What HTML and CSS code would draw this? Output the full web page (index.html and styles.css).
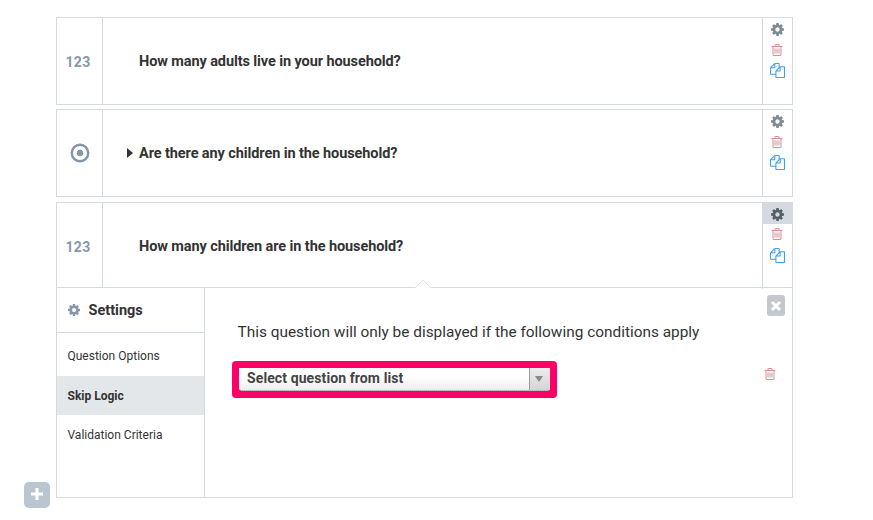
FILE: index.html
```
<!DOCTYPE html>
<html lang="en">
<head>
<meta charset="utf-8">
<title>Form builder</title>
<link rel="stylesheet" href="styles.css">
</head>
<body>
<svg class="defs" width="0" height="0">
  <symbol id="cog" viewBox="0 0 1792 1792"><path d="M1152 896q0-106-75-181t-181-75-181 75-75 181 75 181 181 75 181-75 75-181zm512-109v222q0 12-8 23t-20 13l-185 28q-19 54-39 91 35 50 107 138 10 12 10 25t-9 23q-27 37-99 108t-94 71q-12 0-26-9l-138-108q-44 23-91 38-16 136-29 186-7 28-36 28h-222q-14 0-24.5-8.5t-11.5-21.5l-28-184q-49-16-90-37l-141 107q-10 9-25 9-14 0-25-11-126-114-165-168-7-10-7-23 0-12 8-23 15-21 51-66.500t54-70.500q-27-50-41-99l-183-27q-13-2-21-12.500t-8-23.500v-222q0-12 8-23t19-13l186-28q14-46 39-92-40-57-107-138-10-12-10-24 0-10 9-23 26-36 98.500-107.500t94.500-71.500q13 0 26 10l138 107q44-23 91-38 16-136 29-186 7-28 36-28h222q14 0 24.500 8.500t11.500 21.500l28 184q49 16 90 37l142-107q9-9 24-9 13 0 25 10 129 119 165 170 7 8 7 22 0 12-8 23-15 21-51 66.500t-54 70.500q26 50 41 98l183 28q13 2 21 12.500t8 23.500z"/></symbol>
  <symbol id="trash" viewBox="0 0 1792 1792"><path d="M704 736v576q0 14-9 23t-23 9h-64q-14 0-23-9t-9-23v-576q0-14 9-23t23-9h64q14 0 23 9t9 23zm256 0v576q0 14-9 23t-23 9h-64q-14 0-23-9t-9-23v-576q0-14 9-23t23-9h64q14 0 23 9t9 23zm256 0v576q0 14-9 23t-23 9h-64q-14 0-23-9t-9-23v-576q0-14 9-23t23-9h64q14 0 23 9t9 23zm128 724v-948h-896v948q0 22 7 40.500t14.500 27 10.500 8.500h832q3 0 10.500-8.500t14.500-27 7-40.500zm-672-1076h448l-48-117q-7-9-17-11h-317q-10 2-17 11zm928 32v64q0 14-9 23t-23 9h-96v948q0 83-47 143.500t-113 60.500h-832q-66 0-113-58.500t-47-141.500v-952h-96q-14 0-23-9t-9-23v-64q0-14 9-23t23-9h309l70-167q15-37 54-63t79-26h320q40 0 79 26t54 63l70 167h309q14 0 23 9t9 23z"/></symbol>
  <symbol id="copy" viewBox="0 0 1792 1792"><path d="M1696 384q40 0 68 28t28 68v1216q0 40-28 68t-68 28h-960q-40 0-68-28t-28-68v-288h-544q-40 0-68-28t-28-68v-672q0-40 20-88t48-76l408-408q28-28 76-48t88-20h416q40 0 68 28t28 68v328q68-40 128-40h416zm-544 213l-299 299h299v-299zm-640-384l-299 299h299v-299zm196 647l316-316v-416h-384v416q0 40-28 68t-68 28h-416v640h512v-256q0-40 20-88t48-76zm956 804v-1152h-384v416q0 40-28 68t-68 28h-416v640h896z"/></symbol>
</svg>
<main class="form">
  <section class="question">
    <div class="type">123</div>
    <div class="label">How many adults live in your household?</div>
    <div class="actions">
      <span class="action"><svg class="cog"><use href="#cog"/></svg></span>
      <span class="action"><svg class="trash"><use href="#trash"/></svg></span>
      <span class="action"><svg class="copy"><use href="#copy"/></svg></span>
    </div>
  </section>
  <section class="question">
    <div class="type"><svg class="radio" viewBox="0 0 20 20"><circle cx="10" cy="10" r="8.200" fill="none" stroke="currentColor" stroke-width="2.500"/><circle cx="10" cy="10" r="3.200" fill="currentColor"/></svg></div>
    <div class="label"><svg class="caret" viewBox="0 0 6 10"><path d="M0 0L6 5L0 10z"/></svg>Are there any children in the household?</div>
    <div class="actions">
      <span class="action"><svg class="cog"><use href="#cog"/></svg></span>
      <span class="action"><svg class="trash"><use href="#trash"/></svg></span>
      <span class="action"><svg class="copy"><use href="#copy"/></svg></span>
    </div>
  </section>
  <section class="question open">
    <div class="type">123</div>
    <div class="label">How many children are in the household?</div>
    <div class="actions">
      <span class="action selected"><svg class="cog"><use href="#cog"/></svg></span>
      <span class="action"><svg class="trash"><use href="#trash"/></svg></span>
      <span class="action"><svg class="copy"><use href="#copy"/></svg></span>
    </div>
  </section>
  <section class="settings">
    <svg class="notch" viewBox="0 0 18 10"><path d="M1 9L9 1L17 9V10H1z" fill="#fff"/><path d="M1 9L9 1L17 9" fill="none" stroke="#e2e5e8"/></svg>
    <nav class="tabs">
      <h2 class="heading"><svg class="cog"><use href="#cog"/></svg>Settings</h2>
      <a class="tab first">Question Options</a>
      <a class="tab current">Skip Logic</a>
      <a class="tab">Validation Criteria</a>
    </nav>
    <div class="pane">
      <button class="close" aria-label="Close"><svg viewBox="0 0 12 12"><path d="M2 2L10 10M10 2L2 10"/></svg></button>
      <p class="intro">This question will only be displayed if the following conditions apply</p>
      <div class="condition">
        <div class="highlight"><div class="select"><span class="value">Select question from list</span><span class="arrow"><svg viewBox="0 0 8 6"><path d="M0 0H8L4 6z"/></svg></span></div></div>
        <svg class="trash"><use href="#trash"/></svg>
      </div>
    </div>
  </section>
</main>
<button class="add" aria-label="Add question"><svg viewBox="0 0 12 12"><path d="M6 0V12M0 6H12"/></svg></button>
</body>
</html>
```
FILE: styles.css
```
* { box-sizing: border-box; }
body {
  margin: 0;
  width: 873px;
  height: 520px;
  overflow: hidden;
  position: relative;
  background: #fff;
  color: #333;
  font-family: Roboto, sans-serif;
}
svg { display: block; }
.defs { position: absolute; }
.form { width: 737px; margin-left: 56px; padding-top: 17px; }
.question {
  display: flex;
  height: 88px;
  margin-bottom: 4px;
  border: 1px solid #d4dae0;
}
.question:nth-child(2) { margin-bottom: 5px; }
.question.open { height: 85px; margin-bottom: 0; border-bottom: 0; }
.type {
  display: flex;
  align-items: center;
  justify-content: center;
  width: 46px;
  padding-top: 2px;
  padding-right: 3px;
  border-right: 1px solid #d4dae0;
  color: #8797a9;
  font-size: 14px;
  font-weight: 700;
  letter-spacing: .3px;
}
.open .type { padding-top: 3px; }
.radio { width: 20px; height: 20px; margin-left: 3px; margin-top: -3px; }
.label {
  position: relative;
  flex: 1;
  display: flex;
  align-items: center;
  padding-left: 36px;
  font-size: 14.5px;
  font-weight: 700;
  letter-spacing: -.095px;
}
.open .label { padding-top: 2px; }
.caret { width: 6px; height: 10px; margin-left: -12px; margin-right: 6px; fill: #333; }
.actions { width: 30px; border-left: 1px solid #d4dae0; }
.open .actions { height: 86px; }
.action { display: flex; align-items: center; justify-content: center; height: 21px; padding-right: 1px; }
.actions .cog { width: 15px; height: 15px; margin-top: 1px; fill: #7f8c96; }
.selected { background: #d4dae0; margin-left: -1px; padding-left: 1px; }
.actions .selected .cog { fill: #56616b; }
.trash { width: 14px; height: 14px; fill: #d98e93; }
.open .actions .trash { margin-top: -1px; }
.copy { width: 15px; height: 15px; fill: #3ba1ec; }
.settings {
  position: relative;
  display: flex;
  height: 211px;
  border: 1px solid #d4dae0;
}
.notch { position: absolute; left: 357px; top: -9px; width: 18px; height: 10px; }
.tabs { width: 148px; border-right: 1px solid #d4dae0; }
.heading {
  display: flex;
  align-items: center;
  height: 45px;
  margin: 0;
  padding-left: 9.5px;
  border-bottom: 1px solid #d4dae0;
  font-size: 14.5px;
  font-weight: 700;
}
.heading .cog { width: 14px; height: 14px; margin-right: 8px; fill: #8797a9; }
.tab { display: flex; align-items: center; height: 39px; padding-left: 10.5px; font-size: 12px; }
.tab.first { height: 43px; padding-top: 2px; }
.tab.current { background: #e3e7ea; font-weight: 700; }
.pane { position: relative; flex: 1; padding: 33px 15px 0 27px; }
.close {
  position: absolute;
  right: 7px;
  top: 7px;
  display: grid;
  place-items: center;
  width: 18px;
  height: 21px;
  padding: 0;
  border: 0;
  border-radius: 3px;
  background: #c3c8cd;
}
.close svg { width: 12px; height: 12px; }
.close path { stroke: #fff; stroke-width: 3; }
.intro { margin: 0 0 0 5.5px; font-size: 15.4px; line-height: 22px; white-space: nowrap; }
.condition { display: flex; align-items: center; justify-content: space-between; margin-top: 18px; }
.highlight { width: 325px; height: 37px; padding: 7px; border-radius: 4px; background: #ff0066; }
.select {
  display: flex;
  height: 23px;
  border-bottom: 1px dotted #777;
  border-radius: 0 0 3px 3px;
  background: linear-gradient(#fff 35%, #eee);
}
.value { flex: 1; padding-left: 8px; color: #444; font-size: 14px; line-height: 20px; font-weight: 700; letter-spacing: .1px; }
.arrow {
  display: grid;
  place-items: center;
  width: 21px;
  padding-right: 2px;
  border-left: 1px solid #999;
  background: linear-gradient(#ececec, #d5d5d5);
}
.arrow svg { width: 8px; height: 6px; fill: #888; }
.condition .trash { margin-top: -12px; }
.add {
  position: absolute;
  left: 24px;
  top: 482px;
  display: grid;
  place-items: center;
  width: 26px;
  height: 26px;
  padding: 0 0 2px;
  border: 0;
  border-radius: 5px;
  background: #bac6cf;
}
.add svg { width: 12px; height: 12px; }
.add path { stroke: #fff; stroke-width: 3; }
```
